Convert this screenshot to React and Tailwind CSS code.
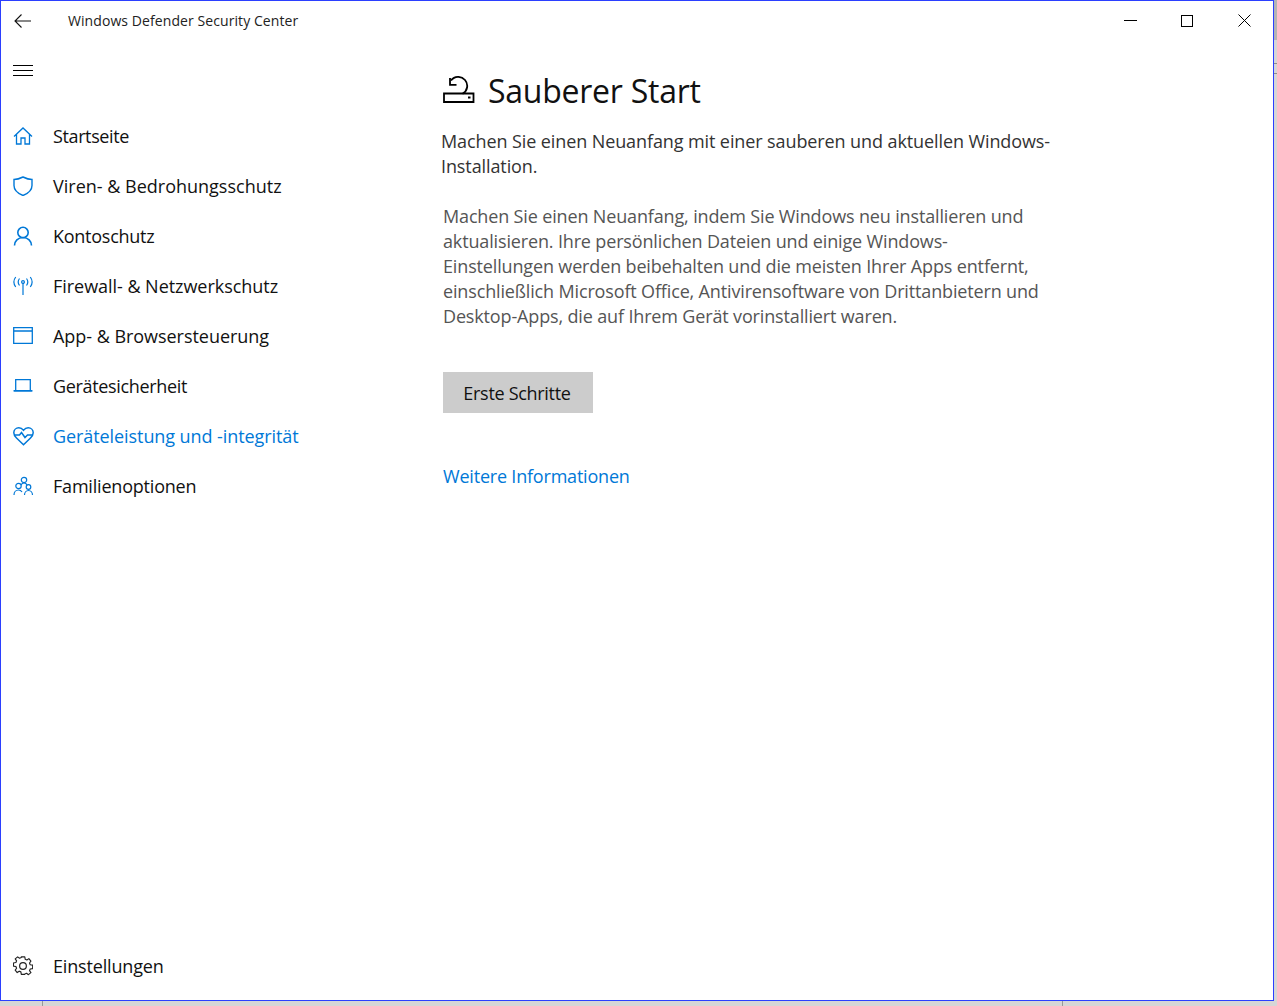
const font = { fontFamily: '"Open Sans", sans-serif' };

const HomeIcon = () => (
  <svg width="20" height="20" viewBox="0 0 20 20" fill="none" stroke="#0078d7" strokeWidth="1.3">
    <path d="M1 10.500 10 2l9 8.500M3.500 8.500V18H8v-6h4v6h4.500V8.500" />
  </svg>
);
const ShieldIcon = () => (
  <svg width="20" height="20" viewBox="0 0 20 20" fill="none" stroke="#0078d7" strokeWidth="1.4">
    <path d="M1 3.500c3 0 6-1 9-2.500 3 1.500 6 2.500 9 2.500v6c0 4.500-4 8-9 10-5-2-9-5.500-9-10z" />
  </svg>
);
const UserIcon = () => (
  <svg width="20" height="20" viewBox="0 0 20 20" fill="none" stroke="#0078d7" strokeWidth="1.6">
    <circle cx="10" cy="6.500" r="5.200" />
    <path d="M1.500 19.500c0-4.500 3.500-8 8.500-8s8.500 3.500 8.500 8" />
  </svg>
);
const AntennaIcon = () => (
  <svg width="20" height="20" viewBox="0 0 20 20" fill="none" stroke="#0078d7" strokeWidth="1.2">
    <circle cx="10" cy="6" r="1.400" />
    <path d="M10 7v12M6.500 2.500c-1.500 2-1.500 5 0 7M13.500 2.500c1.500 2 1.500 5 0 7M2.700 1c-2.200 3-2.200 7 0 10M17.300 1c2.200 3 2.200 7 0 10" />
  </svg>
);
const WindowIcon = () => (
  <svg width="20" height="20" viewBox="0 0 20 20" fill="none" stroke="#0078d7" strokeWidth="1.300">
    <path d="M.7 1.700h18.600v15.600H.7zM.7 5h18.600" />
  </svg>
);
const LaptopIcon = () => (
  <svg width="20" height="20" viewBox="0 0 20 20" fill="none" stroke="#0078d7" strokeWidth="1.300">
    <path d="M2.700 14V3.700h14.600V14" />
    <path d="M1.200 14.800h17.600" strokeWidth="1.700" strokeLinecap="round" />
  </svg>
);
const HeartIcon = () => (
  <svg width="21" height="20" viewBox="0 0 21 20" fill="none" stroke="#0078d7" strokeWidth="1.500">
    <path d="M3.500 12C1.500 10 .8 8.500.8 6.800c0-3 2.300-5 5-5 2 0 3.500 1 4.700 2.500C11.700 2.800 13.200 1.800 15.200 1.800c2.700 0 5 2 5 5 0 1.700-.7 3.200-2.700 5.200l-7 6.800z" />
    <path d="M1 9h5.500l2-2.500 3.500 5 2.500-2.500H20" />
  </svg>
);
const FamilyIcon = () => (
  <svg width="22" height="20" viewBox="0 0 22 20" fill="none" stroke="#0078d7" strokeWidth="1.200">
    <circle cx="11" cy="4" r="2.700" />
    <circle cx="5.500" cy="10" r="2.700" />
    <circle cx="15.500" cy="11" r="2.300" />
    <path d="M1 19c0-3 2-5 4.500-5 1.500 0 2.800.8 3.500 2M11.500 19c0-2.500 1.700-4.500 4-4.500s4 2 4 4.500M8 9c.5-1 1.700-2 3-2 1.500 0 2.500.8 3 2" />
  </svg>
);
const GearIcon = () => (
  <svg width="20" height="20" viewBox="0 0 22 22" fill="none" stroke="#222" strokeWidth="1.300" strokeLinejoin="round">
    <circle cx="11" cy="11" r="3.700" />
    <path d="M9 1h4l.5 2.800 1.900.8 2.300-1.600 2.300 2.800-1.600 2.200.8 2 2.800.4v4l-2.800.5-.8 1.900 1.600 2.300-2.800 2.300-2.200-1.600-2 .8L13 21H9l-.5-2.800-1.900-.8-2.300 1.600L2 16.200l1.600-2.200-.8-2L0 11.600V8l2.800-.5.8-1.900L2 3.300l2.800-2.300L7 2.600l2-.8z" transform="translate(.5 0) scale(.96)" />
  </svg>
);
const ResetIcon = () => (
  <svg width="32" height="30" viewBox="0 0 32 30" fill="none" stroke="#000" strokeWidth="1.800">
    <path d="M1 17.500h29.500v8.500H1zM25 21.500h2.500" />
    <path d="M8 4.500A9 9 0 1 1 19.500 17.800" />
    <path d="M7 2v6.800h6.500" />
  </svg>
);

const items = [
  { label: "Startseite", icon: <HomeIcon />, tracking: "tracking-[-0.38px]" },
  { label: "Viren- & Bedrohungsschutz", icon: <ShieldIcon />, tracking: "tracking-[0px]" },
  { label: "Kontoschutz", icon: <UserIcon />, tracking: "tracking-[-0.26px]" },
  { label: "Firewall- & Netzwerkschutz", icon: <AntennaIcon />, tracking: "tracking-[-0.04px]" },
  { label: "App- & Browsersteuerung", icon: <WindowIcon />, tracking: "tracking-[-0.04px]" },
  { label: "Gerätesicherheit", icon: <LaptopIcon />, tracking: "tracking-[-0.33px]" },
  { label: "Geräteleistung und -integrität", icon: <HeartIcon />, tracking: "tracking-[-0.08px]", active: true },
  { label: "Familienoptionen", icon: <FamilyIcon />, tracking: "tracking-[-0.2px]" },
];

export default function App() {
  return (
    <div className="relative h-[1006px] w-[1277px] overflow-hidden bg-[#d6d6d6]" style={font}>
      {/* what is left of the window behind this one */}
      <div className="absolute top-0 right-0 h-[40px] w-[3px] bg-[#b4b4b4]" />
      <div className="absolute top-[63px] right-0 h-px w-[3px] bg-[#8c8c8c]" />
      <div className="absolute top-[73px] right-0 h-px w-[3px] bg-[#8c8c8c]" />
      <div className="absolute bottom-0 left-[42px] h-[5px] w-px bg-[#999999]" />
      <div className="absolute bottom-0 left-[1062px] h-[5px] w-px bg-[#999999]" />
      <div className="relative flex h-[1001px] w-[1274px] flex-col border border-[#2b3fff] bg-white">
        <div className="flex h-[39px] items-center">
          <div className="flex w-[67px] justify-start pl-[13px]">
            <svg width="17" height="14" viewBox="0 0 17 14" fill="none" stroke="#111" strokeWidth="1.100">
              <path d="M17 7H1M7.500.5 1 7l6.500 6.500" />
            </svg>
          </div>
          <span className="text-[14px] tracking-[0.08px] text-[#222]">Windows Defender Security Center</span>
          <div className="ml-auto flex items-center pr-[22px]">
            <div className="h-px w-[13px] bg-black" />
            <div className="ml-[44px] size-[12px] border border-black" />
            <svg className="ml-[45px]" width="13" height="13" viewBox="0 0 13 13" stroke="#000" strokeWidth="1">
              <path d="M.5.500l12 12M12.500.500l-12 12" />
            </svg>
          </div>
        </div>
        <div className="flex min-h-0 flex-1">
          <nav className="flex w-[442px] shrink-0 flex-col">
            <div className="mt-[25px] ml-[12px] flex w-[20px] flex-col gap-[4px]">
              <div className="h-px bg-black" />
              <div className="h-px bg-black" />
              <div className="h-px bg-black" />
            </div>
            <ul className="mt-[35px] flex flex-col">
              {items.map((item) => (
                <li key={item.label} className="flex h-[50px] items-center">
                  <span className="flex w-[52px] shrink-0 pl-[12px]">{item.icon}</span>
                  <span className={`text-[18px] ${item.tracking} ${item.active ? "text-[#0078d7]" : "text-[#111]"}`}>
                    {item.label}
                  </span>
                </li>
              ))}
            </ul>
            <div className="mt-auto mb-[9px] flex h-[50px] items-center">
              <span className="flex w-[52px] shrink-0 pl-[12px]">
                <GearIcon />
              </span>
              <span className="text-[18px] tracking-[-0.16px] text-[#111]">Einstellungen</span>
            </div>
          </nav>
          <main className="min-w-0 flex-1">
            <div className="mt-[19px] flex h-[64px] items-center gap-[13px]">
              <ResetIcon />
              <h1 className="text-[32px] tracking-[-0.25px] text-[#111]">Sauberer Start</h1>
            </div>
            <p className="-ml-[2px] mt-[6px] w-[640px] text-[18px] leading-[25px] tracking-[-0.1px] text-[#333]">
              Machen Sie einen Neuanfang mit einer sauberen und aktuellen Windows-<br />Installation.
            </p>
            <p className="mt-[25px] w-[640px] text-[18px] leading-[25px] tracking-[-0.15px] text-[#555]">
              Machen Sie einen Neuanfang, indem Sie Windows neu installieren und<br />
              aktualisieren. Ihre persönlichen Dateien und einige Windows-<br />
              Einstellungen werden beibehalten und die meisten Ihrer Apps entfernt,<br />
              einschließlich Microsoft Office, Antivirensoftware von Drittanbietern und<br />
              Desktop-Apps, die auf Ihrem Gerät vorinstalliert waren.
            </p>
            <button className="mt-[43px] block h-[41px] w-[150px] bg-[#cccccc] pt-[2px] pr-[2px] text-[18px] tracking-[-0.3px] text-[#111]">
              Erste Schritte
            </button>
            <a className="mt-[51px] block text-[18px] leading-[25px] tracking-[-0.2px] text-[#0078d7]">Weitere Informationen</a>
          </main>
        </div>
      </div>
    </div>
  );
}
